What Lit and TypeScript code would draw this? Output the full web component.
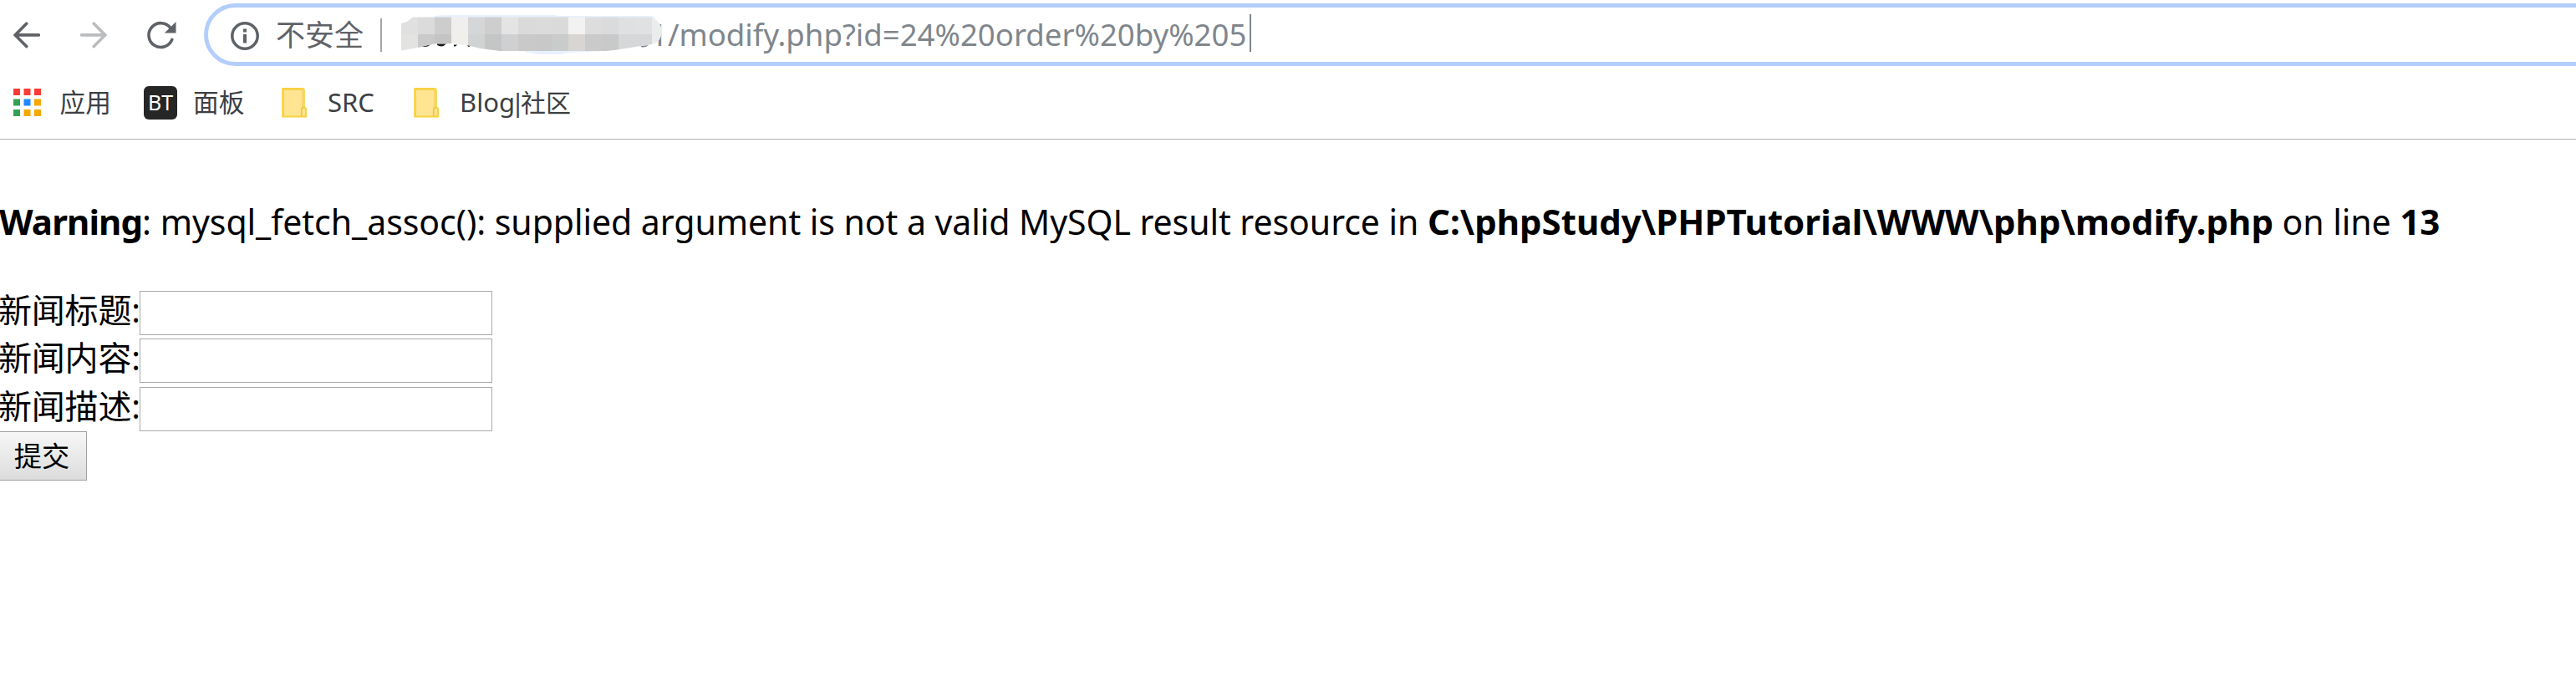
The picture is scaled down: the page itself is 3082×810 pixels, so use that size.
import { LitElement, html, css, svg } from "lit";
import { customElement, property } from "lit/decorators.js";

const TOP_CELLS = ["#e0e0e0", "#dbdbdb", "#cdcdcd", "#f0efed", "#d5d6d8", "#cecece", "#e4e4e4", "#dadada", "#dbdbdb", "#dadada", "#f2f2f2", "#dddddd", "#dadbdd", "#dfe0e1", "#e0e1e3", "#eaedec"];
const BOTTOM_CELLS = ["#e3e3e1", "#cacaca", "#c4c4c4", "#f1efeb", "#d1d2d4", "#c4c6c5", "#cfd0d2", "#c9c9c9", "#c7c8c7", "#c9cccb", "#d8d5d3", "#cacaca", "#c8cac9", "#d6d7d9", "#d6d7d8", "#eaedec"];

const backIcon = html`<svg width="32" height="34" viewBox="16 24.5 32 34" fill="none" stroke="#5f6368" stroke-width="3.6" stroke-linecap="round"><path d="M46.3 41.4H18.5M31.7 27.7L18.2 41.4L31.7 55.1" /></svg>`;
const forwardIcon = html`<svg width="32" height="34" viewBox="96 24.5 32 34" fill="none" stroke="#babcbe" stroke-width="3.6" stroke-linecap="round"><path d="M97.7 41.4H125.5M112.3 27.7L125.8 41.4L112.3 55.1" /></svg>`;
const reloadIcon = html`<svg width="35" height="34" viewBox="175.5 25 35 34"><path d="M203.5 33.5A14.4 14.4 0 1 0 205.3 47.4" fill="none" stroke="#5f6368" stroke-width="3.6" stroke-linecap="round" /><path d="M210 26V39.5H196.3Z" fill="#5f6368" /></svg>`;
const infoIcon = html`<svg width="34" height="34" viewBox="0 0 34 34"><circle cx="17" cy="17" r="15.2" fill="none" stroke="#5f6368" stroke-width="3.5" /><path d="M15 8.6h4v4h-4zM15 15h4v10.4h-4z" fill="#5f6368" /></svg>`;
const folderIcon = html`<svg width="30" height="36" viewBox="0 0 30 36"><path d="M1.2 1H24.5Q26.8 1 26.8 3V23.5Q29 23.5 29 26V34.6H1.2Z" fill="#ffe591" stroke="#f8d23e" stroke-width="2" /><path d="M23.8 34V26Q23.8 23.6 26.6 23.6" fill="none" stroke="#efc83f" stroke-width="1.8" /><path d="M2.6 2.6H24.6V23M2.6 2.6V33" fill="none" stroke="#f0cd5c" stroke-width=".9" /></svg>`;

const appsIcon = html`<svg width="33" height="33" viewBox="0 0 33 33">${[
  ["#fb3b35", "#fb3b35", "#fb3b35"],
  ["#34a152", "#2189fb", "#f6a700"],
  ["#34a152", "#f6a700", "#f6a700"],
].map((row, r) => row.map((c, i) => svg`<rect x=${i * 12.5} y=${r * 12.5} width="8" height="8" fill=${c} />`))}</svg>`;

@customElement("address-mosaic")
class AddressMosaic extends LitElement {
  static styles = css`
    :host { display: block; position: relative; z-index: 1; width: 312px; height: 48px; }
    svg { display: block; }
  `;
  render() {
    return html`<svg width="312" height="48" viewBox="480 17 312 48">
      <path d="M520 20V18L530 17H665V18H780L785 21H520ZM625 59L632 62L645 64H671L680 62L725 60V58Z" fill="#e8f0fe" />
      <clipPath id="smear"><path d="M480 27L487 25L494 19.5H780Q791 25 792 36Q791 50 780 52L735 59L725 60H598L575 57L558 53L540 51H522L505 55L480 59.5Z" /></clipPath>
      <g fill="#15181b"><path d="M505 53.8L515 52.5Q511 56 505 54.7ZM523 51.5H534Q529 56.5 523 53ZM543 52.4H547L545 54.6H543ZM559 53H562V54.8H560Z" /></g>
      <path d="M767 54L776 53Q771 56.8 767 55Z" fill="#7f868c" />
      <g clip-path="url(#smear)" shape-rendering="crispEdges">
        ${TOP_CELLS.map((c, i) => svg`<rect x=${480 + i * 20} y="19" width="20" height="21" fill=${c} />`)}
        ${BOTTOM_CELLS.map((c, i) => svg`<rect x=${480 + i * 20} y="40" width="20" height="20" fill=${c} />`)}
      </g>
    </svg>`;
  }
}

@customElement("browser-toolbar")
class BrowserToolbar extends LitElement {
  static styles = css`
    :host { display: flex; height: 83px; overflow: hidden; box-sizing: border-box; padding-top: 4px; align-items: flex-start; }
    svg { display: block; flex: none; }
    .nav { display: flex; align-items: center; gap: 48px; height: 75px; padding-left: 16px; width: 228px; flex: none; }
    .pill { display: flex; align-items: center; box-sizing: border-box; flex: 1; height: 75px; margin-right: -60px; padding-left: 27px; border: 5px solid #b3cefb; border-radius: 38px; background: #fff; white-space: pre; }
    .info { margin-top: 3px; }
    .state { margin-left: 20px; width: 125px; font-size: 35px; line-height: 50px; color: #5f6368; }
    .divider { width: 2px; height: 40px; margin-right: 23px; background: #a5a5a5; }
    .url { margin-left: -14px; width: 717px; font-size: 36.6px; line-height: 50px; color: #7f868c; margin-top: -2px; }
    .caret { width: 2px; height: 45px; margin-top: -4px; background: #7f868c; }
  `;
  render() {
    return html`
      <div class="nav">${backIcon}${forwardIcon}${reloadIcon}</div>
      <div class="pill">
        <div class="info">${infoIcon}</div>
        <span class="state">不安全</span>
        <span class="divider"></span>
        <address-mosaic></address-mosaic>
        <span class="url">1/modify.php?id=24%20order%20by%205</span>
        <span class="caret"></span>
      </div>`;
  }
}

@customElement("bookmarks-bar")
class BookmarksBar extends LitElement {
  static styles = css`
    :host { display: flex; box-sizing: border-box; height: 84px; padding: 19px 0 0 15.5px; border-bottom: 1px solid #b0b0b0; color: #3c4043; }
    svg { display: block; }
    .item { display: flex; align-items: center; height: 41px; gap: 23px; white-space: pre; line-height: 41px; font-size: 30.7px; }
    .apps { width: 156.5px; }
    .panel { width: 165px; gap: 19px; }
    .src { width: 158px; gap: 25px; }
    .blog { gap: 25px; font-size: 30px; }
    .latin { font-size: 31px; }
    .bar { margin: 0 -5px 0 -5px; }
    .bt { display: block; width: 40px; height: 40px; border-radius: 6px; background: #262626; color: #fff; font-size: 25px; line-height: 38px; text-align: center; }
  `;
  render() {
    return html`
      <div class="item apps">${appsIcon}<span>应用</span></div>
      <div class="item panel"><span class="bt">BT</span><span>面板</span></div>
      <div class="item src">${folderIcon}<span class="latin">SRC</span></div>
      <div class="item blog">${folderIcon}<span><span class="latin">Blog<span class="bar">|</span></span>社区</span></div>`;
  }
}

@customElement("news-form")
class NewsForm extends LitElement {
  @property({ attribute: false }) fields: string[] = [];
  static styles = css`
    :host { display: block; }
    .rows { display: grid; grid-template-rows: 57px 58px 53px; }
    .row { display: flex; align-items: flex-start; }
    .label { width: 169px; margin-left: -2px; font-size: 40px; letter-spacing: -0.2px; line-height: 45px; white-space: nowrap; }
    .field { box-sizing: border-box; width: 422px; height: 53px; margin: 0; padding: 2px; border: 1px solid #a9a9a9; border-radius: 0; background: #fff; }
    .submit { display: block; box-sizing: border-box; width: 108px; height: 59px; margin-left: -4px; padding: 0; border: 1px solid #a0a0a0; border-radius: 0; background: linear-gradient(#f7f7f7, #dcdcdc); color: #000; font-family: inherit; font-size: 33.3px; line-height: 57px; text-align: center; }
  `;
  render() {
    return html`
      <div class="rows">
        ${this.fields.map((f) => html`<label class="row"><span class="label">${f}:</span><input class="field" type="text" /></label>`)}
      </div>
      <button class="submit">提交</button>`;
  }
}

@customElement("app-root")
class AppRoot extends LitElement {
  static styles = css`
    :host { display: flex; flex-direction: column; height: 810px; overflow: hidden; background: #fff; color: #000; font-family: "Noto Sans", "Noto Sans CJK SC", sans-serif; }
    .warning { height: 60px; margin: 68px 0 53px -1px; font-size: 41px; line-height: 60px; letter-spacing: -0.05px; white-space: pre; }
    .warning b { font-size: 42px; line-height: 1; }
    .warning .level { letter-spacing: -0.9px; }
    .warning .path { letter-spacing: 0; }
  `;
  render() {
    return html`
      <browser-toolbar></browser-toolbar>
      <bookmarks-bar></bookmarks-bar>
      <div class="warning"><b class="level">Warning</b>: mysql_fetch_assoc(): supplied argument is not a valid MySQL result resource in <b class="path">C:\\phpStudy\\PHPTutorial\\WWW\\php\\modify.php</b> on line <b>13</b></div>
      <news-form .fields=${["新闻标题", "新闻内容", "新闻描述"]}></news-form>`;
  }
}
